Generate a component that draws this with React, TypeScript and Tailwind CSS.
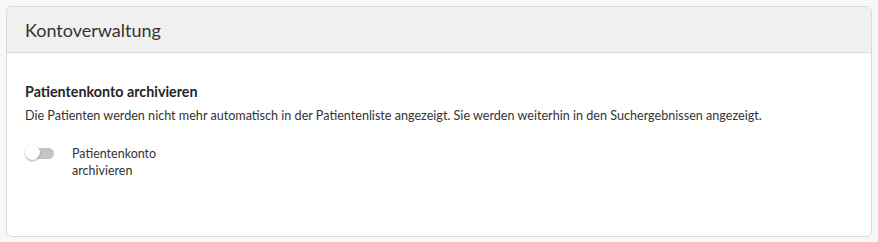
import React from "react";

export default function App() {
  return (
    <div className="w-[878px] h-[242px] bg-[#f7f7f7] p-[6px] text-[#333333]" style={{ fontFamily: "Lato, 'Noto Sans', sans-serif" }}>
      <div className="h-[231px] bg-white border border-[#d9d9d9] rounded-[6px] overflow-hidden flex flex-col">
        <div className="h-[46px] bg-[#f0f0f0] border-b border-[#d9d9d9] flex items-center px-[18px] shrink-0">
          <span className="text-[18px] leading-none text-[#333333]">Kontoverwaltung</span>
        </div>
        <div className="px-[18px] pt-[29px]">
          <div className="text-[14.3px] leading-[20px] font-bold text-[#262626]">Patientenkonto archivieren</div>
          <div className="mt-[4px] text-[12.6px] leading-[20px] text-[#333333]">
            Die Patienten werden nicht mehr automatisch in der Patientenliste angezeigt. Sie werden weiterhin in den Suchergebnissen angezeigt.
          </div>
          <div className="mt-[19px] flex items-start">
            <div className="relative w-[29px] h-[17px] mt-0 shrink-0">
              <div className="absolute left-[3px] right-0 top-[3px] h-[11px] rounded-full bg-[#c4c4c4]" />
              <div className="absolute left-0 top-0 w-[15px] h-[15px] rounded-full bg-white shadow-[0_1px_2px_rgba(0,0,0,0.35)]" />
            </div>
            <div className="ml-[18px] text-[12.5px] leading-[17px] text-[#333333]">
              Patientenkonto
              <br />
              archivieren
            </div>
          </div>
        </div>
      </div>
    </div>
  );
}
